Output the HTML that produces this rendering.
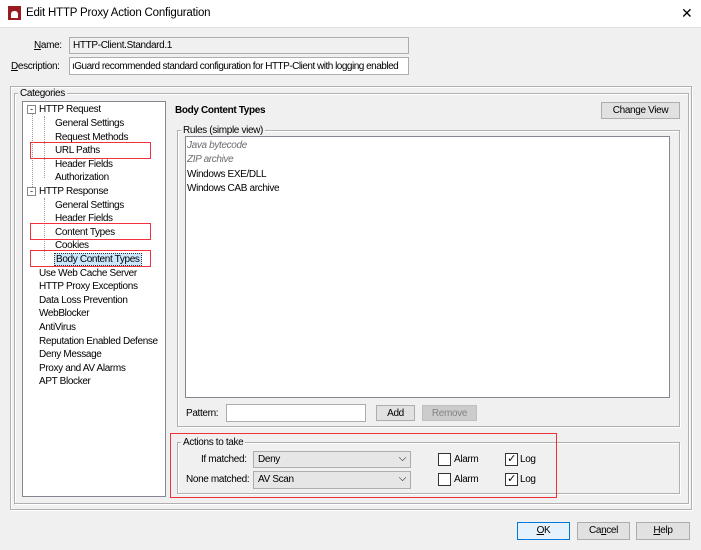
<!DOCTYPE html>
<html><head><style>
*{box-sizing:border-box;margin:0;padding:0}
body{width:701px;height:550px;background:#f0f0f0;font-family:"Liberation Sans",Arial,sans-serif;font-size:10px;letter-spacing:-0.35px;color:#000;position:relative;overflow:hidden}
.a{position:absolute;white-space:nowrap}
.inp{position:absolute;background:#fff;border:1px solid #adadad;padding:2px 3px;white-space:nowrap;overflow:hidden}
.etch{position:absolute;border:1px solid #b0b0b0;box-shadow:inset 1px 1px 0 #fff,1px 1px 0 #fff}
.leg{position:absolute;background:#f0f0f0;padding:0 2px}
.btn{position:absolute;border:1px solid #adadad;background:#e1e1e1;text-align:center;line-height:15px}
.red{position:absolute;border:1.5px solid #f0303a}
.sel{position:absolute;border:1px solid #adadad;background:#e6e6e6;padding:0 4px;line-height:15px}
.cb{position:absolute;width:13px;height:13px;border:1px solid #333;background:#fff}
.t{position:absolute;white-space:nowrap}
</style></head><body>
<div class="a" style="left:0;top:0;width:701px;height:28px;background:#fff;border-bottom:1px solid #e0e0e0"></div>
<div class="a" style="left:8px;top:6px;width:13px;height:14px;background:#9b1c20"></div>
<div class="a" style="left:11px;top:11px;width:7px;height:7px;background:#fff;border-radius:3px 3px 0 0"></div>
<div class="a" style="left:26px;top:7px;font-size:11.5px;letter-spacing:-0.2px">Edit HTTP Proxy Action Configuration</div>
<div class="a" style="left:681px;top:5px;font-size:14px;font-weight:300;letter-spacing:0">✕</div>

<div class="a" style="left:34px;top:40px"><u>N</u>ame:</div>
<div class="inp" style="left:69px;top:37px;width:340px;height:17px;background:#f0f0f0;padding-top:2px">HTTP-Client.Standard.1</div>
<div class="a" style="left:11px;top:61px"><u>D</u>escription:</div>
<div class="inp" style="left:69px;top:57px;width:340px;height:18px;padding-top:3px;padding-left:2px;letter-spacing:-0.5px">ıGuard recommended standard configuration for HTTP-Client with logging enabled</div>

<div class="etch" style="left:10px;top:86px;width:682px;height:424px"></div>
<div class="etch" style="left:14px;top:93px;width:675px;height:411px"></div>
<div class="leg" style="left:18px;top:88px">Categories</div>

<div class="a" style="left:22px;top:101px;width:144px;height:396px;background:#fff;border:1px solid #828790"></div>
<div class="a" style="left:32px;top:113px;height:78px;border-left:1px dotted #999"></div>
<div class="a" style="left:44px;top:116px;height:62px;border-left:1px dotted #999"></div>
<div class="a" style="left:44px;top:198px;height:62px;border-left:1px dotted #999"></div>
<div class="a" style="left:27px;top:105px;width:9px;height:9px;border:1px solid #888;background:#fff;font-size:9px;line-height:6px;text-align:center">-</div>
<div class="a" style="left:27px;top:187px;width:9px;height:9px;border:1px solid #888;background:#fff;font-size:9px;line-height:6px;text-align:center">-</div>
<div class="t" style="left:39px;top:104px">HTTP Request</div>
<div class="t" style="left:55px;top:118px">General Settings</div>
<div class="t" style="left:55px;top:132px">Request Methods</div>
<div class="t" style="left:55px;top:145px">URL Paths</div>
<div class="t" style="left:55px;top:159px">Header Fields</div>
<div class="t" style="left:55px;top:172px">Authorization</div>
<div class="t" style="left:39px;top:186px">HTTP Response</div>
<div class="t" style="left:55px;top:200px">General Settings</div>
<div class="t" style="left:55px;top:213px">Header Fields</div>
<div class="t" style="left:55px;top:227px">Content Types</div>
<div class="t" style="left:55px;top:240px">Cookies</div>
<div class="t" style="left:54px;top:253px;border:1px dotted #333;padding:0 1px;background:#cce8ff">Body Content Types</div>
<div class="t" style="left:39px;top:268px">Use Web Cache Server</div>
<div class="t" style="left:39px;top:281px">HTTP Proxy Exceptions</div>
<div class="t" style="left:39px;top:295px">Data Loss Prevention</div>
<div class="t" style="left:39px;top:308px">WebBlocker</div>
<div class="t" style="left:39px;top:322px">AntiVirus</div>
<div class="t" style="left:39px;top:336px">Reputation Enabled Defense</div>
<div class="t" style="left:39px;top:349px">Deny Message</div>
<div class="t" style="left:39px;top:363px">Proxy and AV Alarms</div>
<div class="t" style="left:39px;top:376px">APT Blocker</div>
<div class="red" style="left:30px;top:142px;width:121px;height:17px"></div>
<div class="red" style="left:30px;top:223px;width:121px;height:17px"></div>
<div class="red" style="left:30px;top:250px;width:121px;height:17px"></div>

<div class="a" style="left:175px;top:105px;font-weight:bold">Body Content Types</div>
<div class="btn" style="left:601px;top:102px;width:79px;height:17px">Change View</div>

<div class="etch" style="left:177px;top:130px;width:503px;height:297px"></div>
<div class="leg" style="left:181px;top:125px">Rules (simple view)</div>
<div class="a" style="left:185px;top:136px;width:485px;height:262px;background:#fff;border:1px solid #828790"></div>
<div class="t" style="left:187px;top:140px;font-style:italic;color:#6d6d6d">Java bytecode</div>
<div class="t" style="left:187px;top:154px;font-style:italic;color:#6d6d6d">ZIP archive</div>
<div class="t" style="left:187px;top:169px">Windows EXE/DLL</div>
<div class="t" style="left:187px;top:183px">Windows CAB archive</div>
<div class="a" style="left:186px;top:408px">Pattern:</div>
<div class="inp" style="left:226px;top:404px;width:140px;height:18px"></div>
<div class="btn" style="left:376px;top:405px;width:39px;height:16px">Add</div>
<div class="btn" style="left:422px;top:405px;width:55px;height:16px;color:#838383;background:#cccccc;border-color:#bfbfbf">Remove</div>

<div class="etch" style="left:177px;top:442px;width:503px;height:52px"></div>
<div class="leg" style="left:181px;top:437px">Actions to take</div>
<div class="a" style="left:201px;top:454px">If matched:</div>
<div class="sel" style="left:253px;top:451px;width:158px;height:17px">Deny<span style="position:absolute;right:4px;top:-1px">⌵</span></div>
<div class="a" style="left:186px;top:474px">None matched:</div>
<div class="sel" style="left:253px;top:471px;width:158px;height:18px;line-height:16px">AV Scan<span style="position:absolute;right:4px;top:-1px">⌵</span></div>
<div class="cb" style="left:438px;top:453px"></div><div class="a" style="left:454px;top:454px">Alarm</div>
<div class="cb" style="left:438px;top:473px"></div><div class="a" style="left:454px;top:474px">Alarm</div>
<div class="cb" style="left:505px;top:453px;font-size:11px;line-height:11px;text-align:center">✓</div><div class="a" style="left:520px;top:454px">Log</div>
<div class="cb" style="left:505px;top:473px;font-size:11px;line-height:11px;text-align:center">✓</div><div class="a" style="left:520px;top:474px">Log</div>
<div class="red" style="left:170px;top:433px;width:387px;height:65px"></div>

<div class="btn" style="left:517px;top:522px;width:53px;height:18px;border-color:#0078d7;background:#e5f1fb"><u>O</u>K</div>
<div class="btn" style="left:577px;top:522px;width:53px;height:18px">Ca<u>n</u>cel</div>
<div class="btn" style="left:636px;top:522px;width:54px;height:18px"><u>H</u>elp</div>
</body></html>
